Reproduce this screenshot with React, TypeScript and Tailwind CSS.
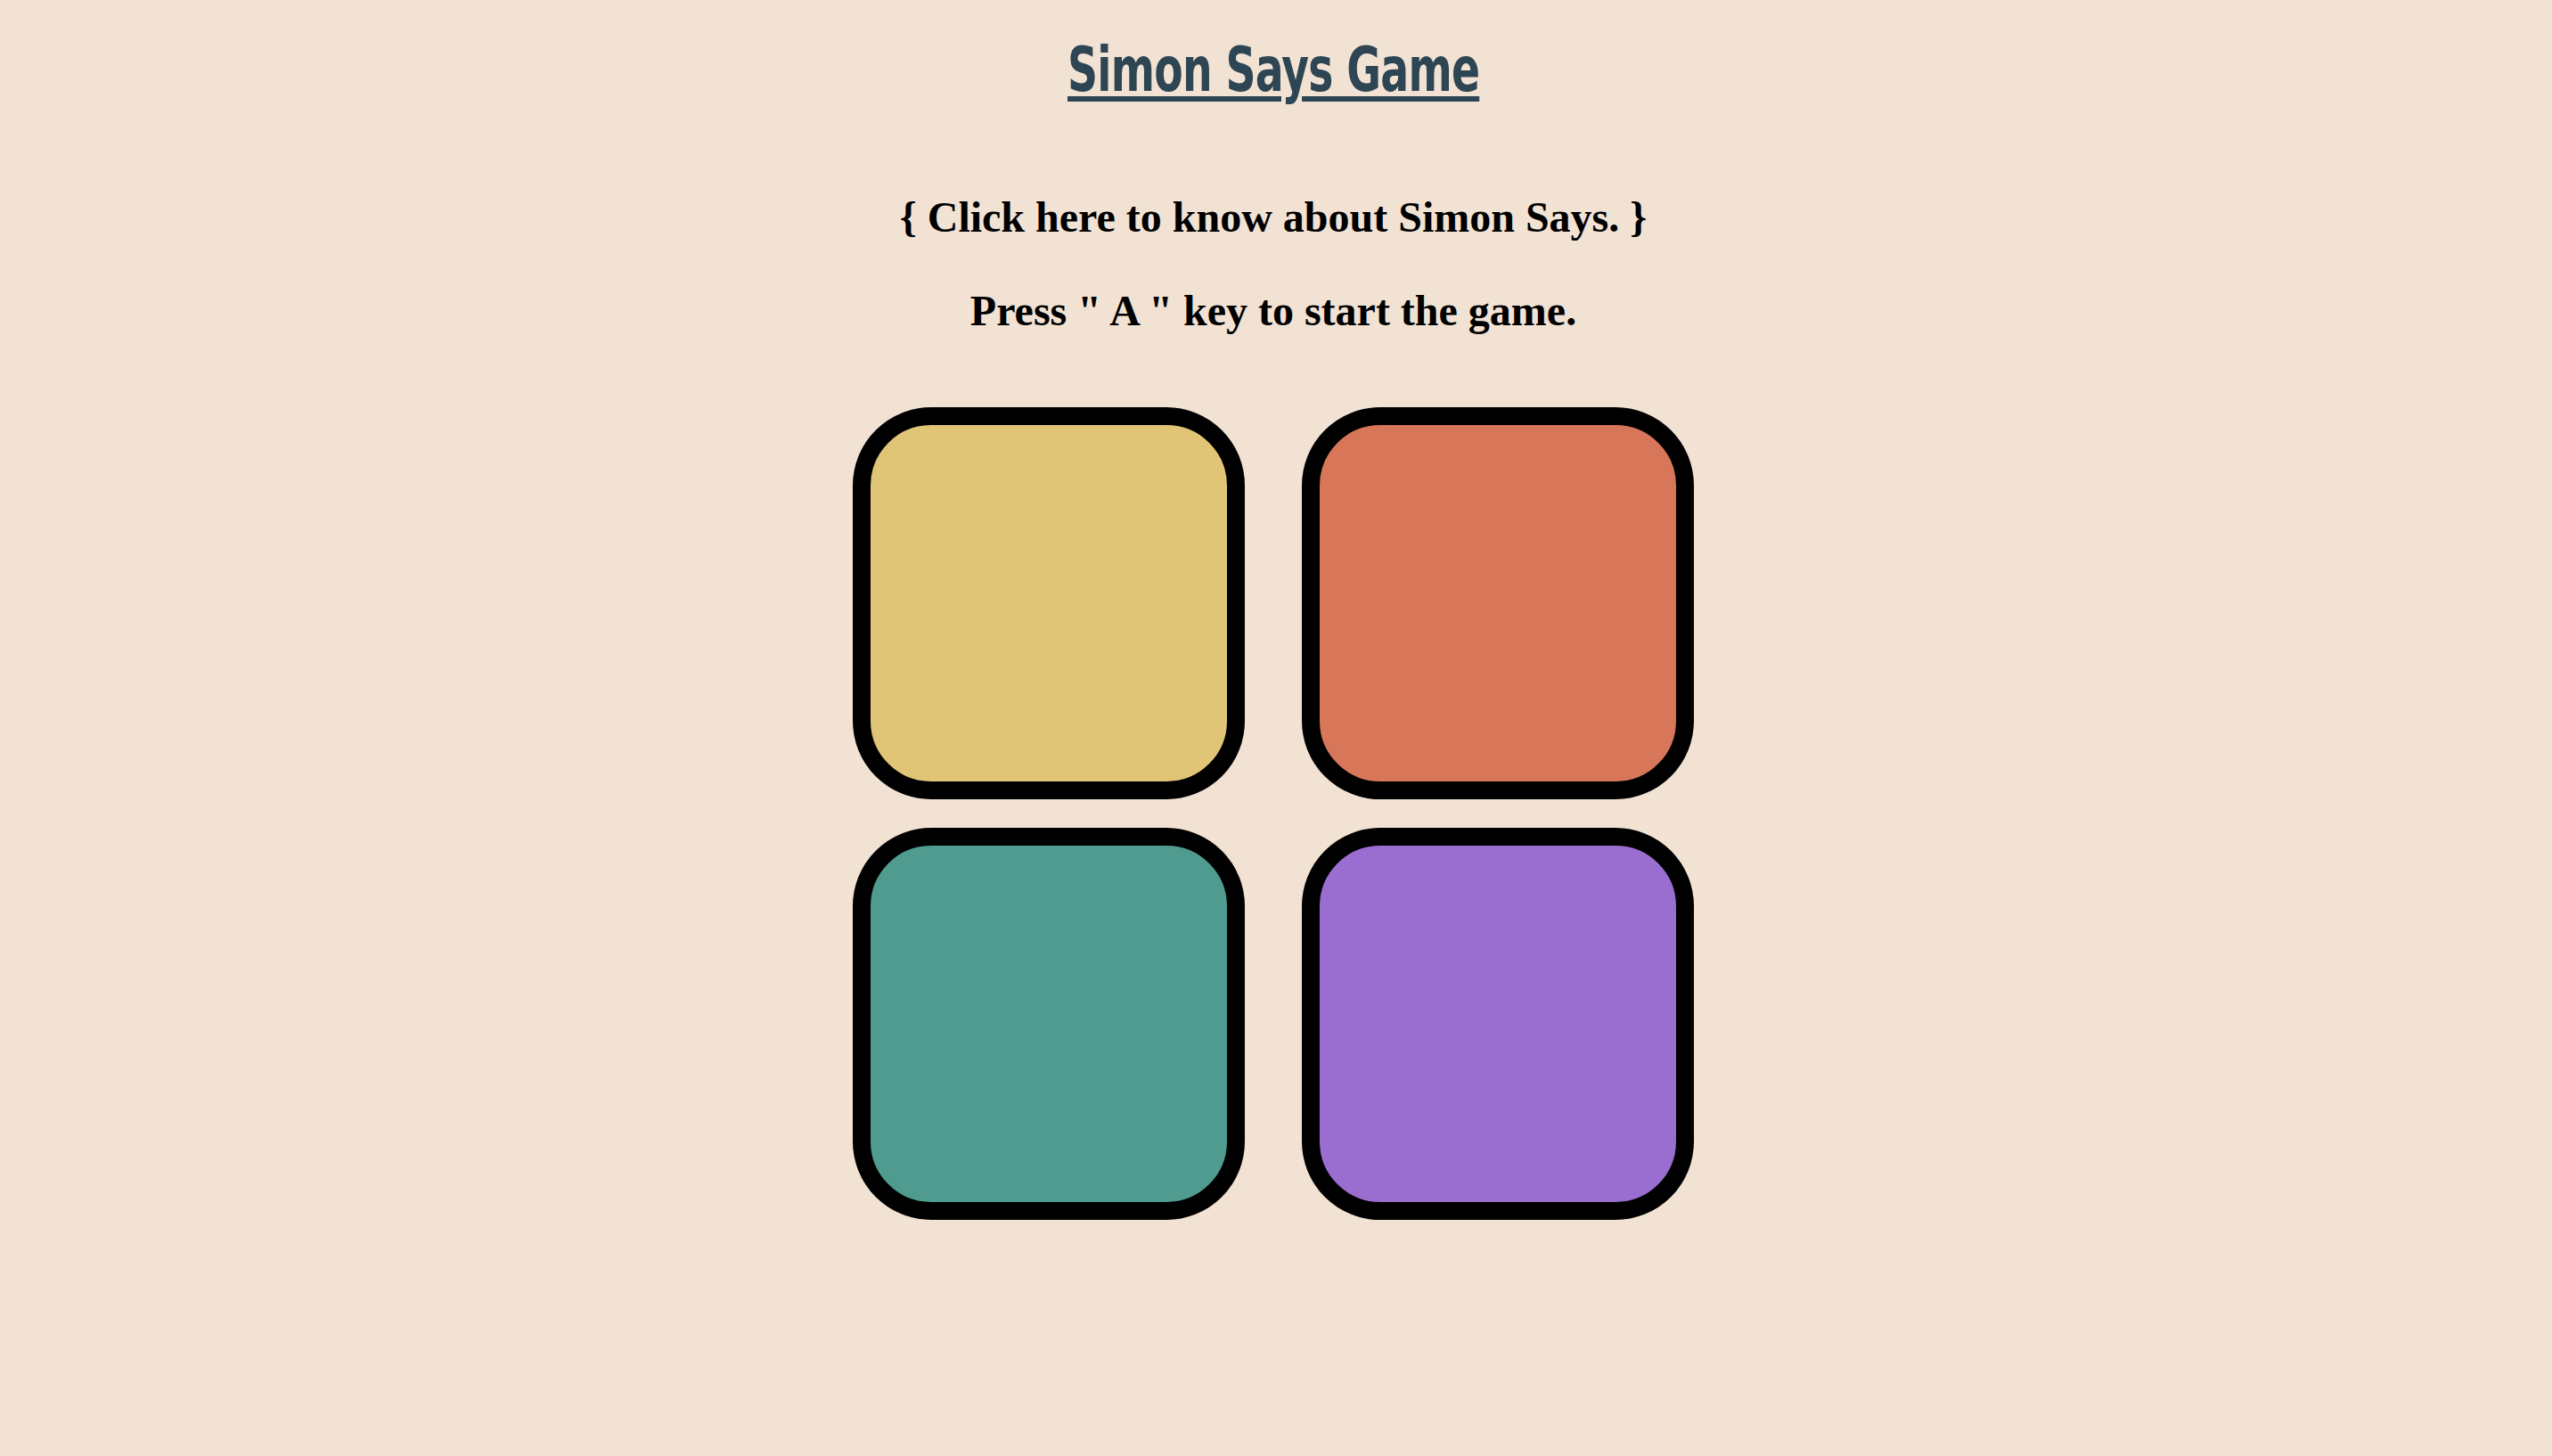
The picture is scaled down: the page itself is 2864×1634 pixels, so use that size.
export default function App() {
  const boxes = ["bg-[#e1c577]", "bg-[#d8765a]", "bg-[#4f9b8f]", "bg-[#9a6dd0]"];
  return (
    <div className="min-h-screen bg-[#f2e2d4] flex flex-col items-center pr-[6px]">
      <h1 className="mt-[43px] h-[68px] text-[70px] leading-none font-bold underline decoration-[6px] underline-offset-[6px] text-[#2e4653] scale-x-[0.75] tracking-[-1px] font-[family-name:Impact,'Liberation_Sans_Narrow','DejaVu_Sans_Condensed',sans-serif]">
        Simon Says Game
      </h1>
      <p className="mt-[109px] h-[48px] text-[48px] leading-none font-bold text-black font-[family-name:'Liberation_Serif',serif]">
        {"{ Click here to know about Simon Says. }"}
      </p>
      <p className="mt-[57px] h-[48px] text-[48px] leading-none font-bold text-black font-[family-name:'Liberation_Serif',serif]">
        Press " A " key to start the game.
      </p>
      <div className="mt-[84px] grid grid-cols-2 gap-x-[64px] gap-y-[32px]">
        {boxes.map((b, i) => (
          <div key={i} className={`w-[440px] h-[440px] border-[20px] border-black rounded-[88px] ${b}`} />
        ))}
      </div>
    </div>
  );
}
